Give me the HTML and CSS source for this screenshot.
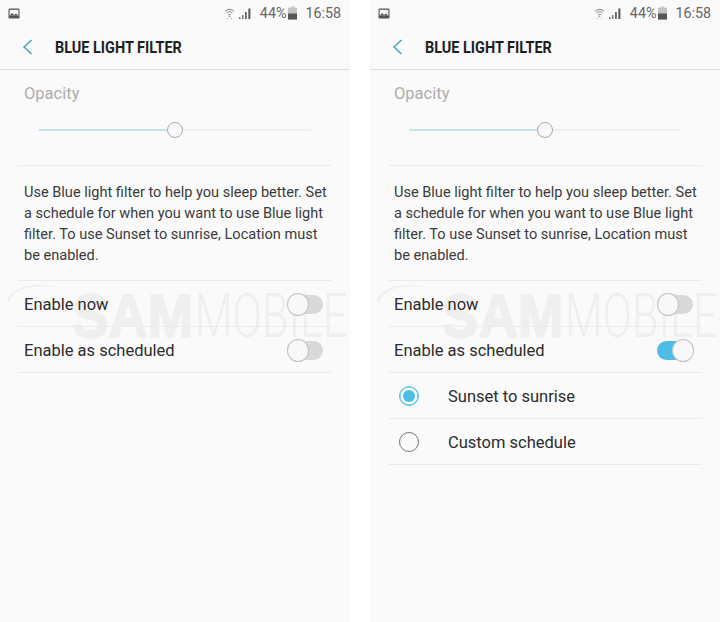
FILE: index.html
```html
<!DOCTYPE html>
<html>
<head>
	<title>Blue light filter</title>
	<link rel="stylesheet" href="styles.css">
</head>
<body>
	<svg class="defs" width="0" height="0">
		<symbol id="picture" viewBox="0 0 12 11">
			<rect x="0.5" y="0.5" width="11" height="10" rx="1.2" fill="#555"/>
			<rect x="1.6" y="1.8" width="8.8" height="6" fill="#f4f4f4"/>
			<path d="M1.6 7.8 L4 5 L6 7 L8 5.5 L10.4 7.8 Z" fill="#555"/>
		</symbol>
		<symbol id="wifi" viewBox="0 0 12 13">
			<path d="M1 4 Q6 0 11 4 M2.8 6 Q6 3.4 9.2 6 M4.4 8 Q6 6.8 7.6 8" fill="none" stroke="#999" stroke-width="1.1"/>
			<circle cx="6" cy="9.6" r="1" fill="#999"/>
			<path d="M3.4 12.6 L4.2 11.4 M8.6 12.6 L7.8 11.4" stroke="#aaa" stroke-width="0.9"/>
		</symbol>
		<symbol id="signal" viewBox="0 0 12 11">
			<rect x="0" y="9" width="1.5" height="2" fill="#777"/>
			<rect x="3" y="7" width="1.5" height="4" fill="#777"/>
			<rect x="6" y="4" width="1.8" height="7" fill="#666"/>
			<rect x="9.4" y="0.5" width="2" height="10.5" fill="#555"/>
		</symbol>
		<symbol id="battery" viewBox="0 0 9 13">
			<rect x="2.8" y="0" width="3.4" height="1.2" fill="#bbb"/>
			<rect x="0" y="1.2" width="9" height="11.8" fill="#c4c4c4"/>
			<rect x="0" y="7" width="9" height="6" fill="#555"/>
		</symbol>
		<symbol id="swirl" viewBox="0 0 60 24">
			<path d="M2 22 C0 8 28 -3 58 5 C34 1 12 6 7 15 C6 18 5 20 2 22 Z" fill="#ecf0f4"/>
		</symbol>
	</svg>

	<div class="shots">
		<div class="phone">
			<div class="watermark">
				<svg class="wm-swirl"><use href="#swirl"/></svg>
				<span class="wm-sam">SAM</span>
				<span class="wm-mobile">MOBILE</span>
			</div>
			<div class="status">
				<svg class="ic-picture"><use href="#picture"/></svg>
				<span class="status-right">
					<svg class="ic-wifi"><use href="#wifi"/></svg>
					<svg class="ic-signal"><use href="#signal"/></svg>
					<span class="pct">44%</span>
					<svg class="ic-battery"><use href="#battery"/></svg>
					<span class="clock">16:58</span>
				</span>
			</div>
			<div class="appbar">
				<svg class="back" viewBox="0 0 11 16"><path d="M9.5 1 L2 8 L9.5 15" fill="none" stroke="#3d9fb5" stroke-width="1.4"/></svg>
				<span class="title">BLUE LIGHT FILTER</span>
			</div>
			<div class="content">
				<div class="opacity">Opacity</div>
				<div class="slider"><span class="fill"></span><span class="knob"></span><span class="rest"></span></div>
				<p class="desc">Use Blue light filter to help you sleep better. Set a schedule for when you want to use Blue light filter. To use Sunset to sunrise, Location must be enabled.</p>
				<div class="row"><span>Enable now</span><span class="switch"><i></i></span></div>
				<div class="row"><span>Enable as scheduled</span><span class="switch"><i></i></span></div>
			</div>
		</div>

		<div class="phone">
			<div class="watermark">
				<svg class="wm-swirl"><use href="#swirl"/></svg>
				<span class="wm-sam">SAM</span>
				<span class="wm-mobile">MOBILE</span>
			</div>
			<div class="status">
				<svg class="ic-picture"><use href="#picture"/></svg>
				<span class="status-right">
					<svg class="ic-wifi"><use href="#wifi"/></svg>
					<svg class="ic-signal"><use href="#signal"/></svg>
					<span class="pct">44%</span>
					<svg class="ic-battery"><use href="#battery"/></svg>
					<span class="clock">16:58</span>
				</span>
			</div>
			<div class="appbar">
				<svg class="back" viewBox="0 0 11 16"><path d="M9.5 1 L2 8 L9.5 15" fill="none" stroke="#3d9fb5" stroke-width="1.4"/></svg>
				<span class="title">BLUE LIGHT FILTER</span>
			</div>
			<div class="content">
				<div class="opacity">Opacity</div>
				<div class="slider"><span class="fill"></span><span class="knob"></span><span class="rest"></span></div>
				<p class="desc">Use Blue light filter to help you sleep better. Set a schedule for when you want to use Blue light filter. To use Sunset to sunrise, Location must be enabled.</p>
				<div class="row"><span>Enable now</span><span class="switch"><i></i></span></div>
				<div class="row"><span>Enable as scheduled</span><span class="switch on"><i></i></span></div>
				<div class="row radio-row"><span class="radio on"></span><span>Sunset to sunrise</span></div>
				<div class="row radio-row"><span class="radio"></span><span>Custom schedule</span></div>
			</div>
		</div>
	</div>
</body>
</html>
```

FILE: styles.css
```css
html, body{
	margin: 0;
	padding: 0;
	background-color: #fff;
}
.defs{
	position: absolute;
}
.shots{
	display: flex;
	gap: 20px;
	font-family: Roboto, "Liberation Sans", sans-serif;
	color: #2c2c2c;
}
.phone{
	position: relative;
	width: 350px;
	height: 622px;
	background-color: #fafafa;
	overflow: hidden;
}

/* status bar */
.status{
	height: 26px;
	display: flex;
	align-items: center;
	justify-content: space-between;
	padding: 0 9px 0 8px;
}
.ic-picture{
	width: 12px;
	height: 11px;
}
.status-right{
	display: flex;
	align-items: center;
	font-size: 14.3px;
	color: #666;
}
.ic-wifi{
	width: 11px;
	height: 13px;
}
.ic-signal{
	width: 12px;
	height: 11px;
	margin-left: 4px;
}
.pct{
	margin-left: 9px;
}
.ic-battery{
	width: 9px;
	height: 14px;
	margin-left: 2px;
}
.clock{
	margin-left: 8px;
}

/* app bar */
.appbar{
	height: 42px;
	display: flex;
	align-items: center;
	border-bottom: 1px solid #e0e0e0;
	padding-bottom: 1px;
	box-sizing: content-box;
}
.back{
	width: 11px;
	height: 16px;
	margin-left: 22px;
}
.title{
	margin-left: 22px;
	font-weight: 700;
	font-size: 17px;
	color: #1f1f1f;
	transform: scaleX(0.85);
	transform-origin: left center;
	white-space: nowrap;
}

.content{
	position: relative;
	padding: 0 18px;
}
.opacity{
	padding: 14px 0 0 6px;
	height: 20px;
	line-height: 20px;
	font-size: 16.5px;
	color: #adadad;
}
.slider{
	display: flex;
	align-items: center;
	height: 18px;
	margin: 17px 21px 0 21px;
}
.fill{
	width: 128px;
	height: 2px;
	background-color: #c5e4ea;
}
.knob{
	width: 14px;
	height: 14px;
	border: 1px solid #a9a9a9;
	border-radius: 50%;
	background-color: #fafafa;
}
.rest{
	flex: 1;
	height: 2px;
	background-color: #eef0f0;
}
.desc{
	margin: 26px 0 0 0;
	padding: 16px 0 14px 6px;
	border-top: 1px solid #ebebeb;
	font-size: 14.55px;
	line-height: 21px;
	color: #3a3a3a;
}
.row{
	display: flex;
	align-items: center;
	justify-content: space-between;
	height: 44px;
	padding: 1px 9px 0 6px;
	border-top: 1px solid #ebebeb;
	font-size: 16.5px;
}
.row:last-child{
	border-bottom: 1px solid #ebebeb;
}
.radio-row{
	justify-content: flex-start;
	gap: 29px;
	padding-left: 11px;
}

/* switches */
.switch{
	position: relative;
	display: block;
	width: 36px;
	height: 19px;
	border-radius: 10px;
	background-color: #d9d9d9;
}
.switch i{
	position: absolute;
	left: 0;
	top: -2px;
	width: 20px;
	height: 21px;
	border: 1px solid #c2c2c2;
	border-radius: 50%;
	background-color: #f8f8f8;
}
.switch.on{
	background-color: #4dbde6;
}
.switch.on i{
	left: 15px;
}
.radio{
	width: 18px;
	height: 18px;
	border: 1px solid #777;
	border-radius: 50%;
	flex: none;
}
.radio.on{
	position: relative;
	border: 1px solid #4dbde6;
	box-shadow: inset 0 0 0 0.5px #4dbde6;
}
.radio.on::after{
	content: "";
	position: absolute;
	left: 3px;
	top: 3px;
	width: 12px;
	height: 12px;
	border-radius: 50%;
	background-color: #4dbde6;
}

/* watermark over the settings list */
.watermark{
	position: absolute;
	left: 0;
	top: 285px;
	width: 350px;
	height: 62px;
	font-family: "Liberation Sans", sans-serif;
	font-size: 62px;
	line-height: 62px;
	white-space: nowrap;
}
.wm-swirl{
	position: absolute;
	left: 5px;
	top: -2px;
	width: 56px;
	height: 22px;
}
.wm-sam{
	position: absolute;
	left: 72px;
	top: 0;
	font-weight: 700;
	color: #efefef;
	-webkit-text-stroke: 2px #efefef;
	transform: scaleX(0.88);
	transform-origin: left center;
}
.wm-mobile{
	position: absolute;
	left: 195px;
	top: 0;
	font-family: Roboto, sans-serif;
	font-weight: 300;
	color: #efefef;
	transform: scaleX(0.7);
	transform-origin: left center;
}
```
